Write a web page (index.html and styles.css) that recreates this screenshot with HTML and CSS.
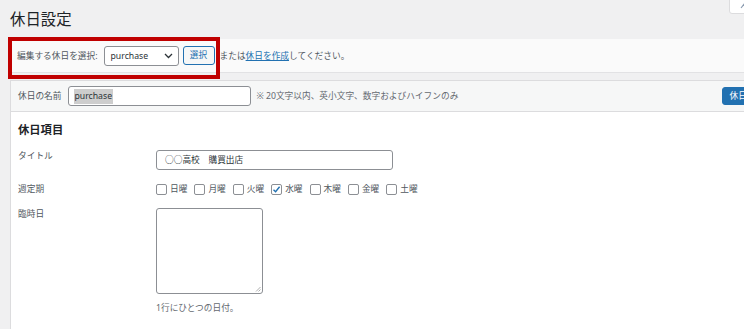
FILE: index.html
```html
<!DOCTYPE html>
<html lang="ja">
<head>
<meta charset="utf-8">
<title>休日設定</title>
<link rel="stylesheet" href="styles.css">
</head>
<body>
<div class="screen-tab"><svg width="6" height="7" viewBox="0 0 6 7"><path d="M1 6 L5 1" stroke="#8a9bb0" stroke-width="1.2" fill="none"/></svg></div>
<div class="wrap">
  <h1 class="page-title">休日設定</h1>
  <div class="manage">
    <span class="label">編集する休日を選択:</span>
    <div class="select"><span>purchase</span><svg class="chev" width="9" height="6" viewBox="0 0 9 6"><path d="M1 1 L4.5 4.5 L8 1" stroke="#2c3338" stroke-width="1.3" fill="none"/></svg></div>
    <button class="btn-secondary">選択</button>
    <span class="or">または<a href="#">休日を作成</a>してください。</span>
    <div class="annot"></div>
  </div>
  <div class="panel">
    <div class="panel-head">
      <span class="label">休日の名前</span>
      <div class="name-input"><span class="sel">purchase</span></div>
      <span class="note">※ 20文字以内、英小文字、数字およびハイフンのみ</span>
      <button class="btn-primary">休日を保存</button>
    </div>
    <div class="panel-body">
      <h3 class="section-title">休日項目</h3>
      <div class="row">
        <span class="row-label">タイトル</span>
        <div class="text-input">○○高校　購買出店</div>
      </div>
      <div class="row row-week">
        <span class="row-label">週定期</span>
        <div class="days">
          <span class="day"><span class="cb"></span>日曜</span>
          <span class="day"><span class="cb"></span>月曜</span>
          <span class="day"><span class="cb"></span>火曜</span>
          <span class="day"><span class="cb checked"><svg width="9" height="9" viewBox="0 0 9 9"><path d="M1.5 4.8 L3.6 6.8 L7.6 1.8" stroke="#2271b1" stroke-width="1.4" fill="none"/></svg></span>水曜</span>
          <span class="day"><span class="cb"></span>木曜</span>
          <span class="day"><span class="cb"></span>金曜</span>
          <span class="day"><span class="cb"></span>土曜</span>
        </div>
      </div>
      <div class="row row-extra">
        <span class="row-label">臨時日</span>
        <div class="field">
          <div class="textarea"><svg class="grip" width="6" height="6" viewBox="0 0 6 6"><path d="M1 5.5 L5.5 1 M3.5 5.5 L5.5 3.5" stroke="#9a9a9a" stroke-width="0.8"/></svg></div>
          <p class="desc">1行にひとつの日付。</p>
        </div>
      </div>
    </div>
  </div>
</div>
</body>
</html>
```
FILE: styles.css
```css
html, body {
  margin: 0;
  padding: 0;
  background: #f0f0f1;
  overflow: hidden;
  width: 744px;
  height: 329px;
}
body {
  font-family: "Noto Sans", "Noto Sans CJK JP", sans-serif;
  font-size: 8.7px;
  color: #3c434a;
  position: relative;
}
.screen-tab {
  position: absolute;
  left: 729px;
  top: -1px;
  width: 40px;
  height: 15px;
  background: #fff;
  border: 1px solid #dcdcde;
  border-radius: 0 0 3px 3px;
  box-sizing: border-box;
  padding: 2px 0 0 10px;
}
.screen-tab svg { display: block; }
.wrap {
  padding-left: 10px;
}
.page-title {
  margin: 0;
  padding-top: 8px;
  font-size: 15.4px;
  line-height: 20px;
  font-weight: 400;
  color: #1d2327;
  font-family: "Noto Sans CJK JP", sans-serif;
}
.manage {
  position: relative;
  margin-top: 11px;
  width: 800px;
  height: 34px;
  box-sizing: border-box;
  background: #fafafa;
  border-bottom: 1px solid #e2e2e4;
  display: flex;
  align-items: center;
  padding-left: 7px;
}
.label {
  color: #50575e;
  line-height: 12px;
}
.select {
  margin-left: 6px;
  width: 75px;
  height: 20px;
  box-sizing: border-box;
  border: 1px solid #8c8f94;
  border-radius: 3px;
  background: #fff;
  display: flex;
  align-items: center;
  justify-content: space-between;
  padding: 0 5px 0 6px;
  color: #2c3338;
  font-size: 8.7px;
}
.chev { display: block; }
.btn-secondary {
  margin-left: 4px;
  height: 19px;
  width: 32px;
  padding: 0;
  box-sizing: border-box;
  border: 1px solid #2271b1;
  border-radius: 3px;
  background: #f6f7f7;
  color: #2271b1;
  font-family: inherit;
  font-size: 8.7px;
  line-height: 17px;
}
.or {
  margin-left: 5px;
  color: #50575e;
  line-height: 12px;
}
.or a {
  color: #2271b1;
  text-decoration: underline;
}
.annot {
  position: absolute;
  left: -2px;
  top: -2px;
  width: 212px;
  height: 42px;
  box-sizing: border-box;
  border: 4px solid #c00000;
}
.panel {
  margin-top: 7px;
  width: 800px;
  height: 260px;
  background: #fff;
  border: 1px solid #dcdcde;
  box-sizing: border-box;
}
.panel-head {
  height: 31px;
  box-sizing: border-box;
  background: #f6f7f7;
  border-bottom: 1px solid #dcdcde;
  display: flex;
  align-items: center;
  padding-left: 7px;
}
.name-input {
  margin-left: 7px;
  width: 183px;
  height: 20px;
  box-sizing: border-box;
  border: 1px solid #8c8f94;
  border-radius: 3px;
  background: #fff;
  display: flex;
  align-items: center;
  padding-left: 5px;
}
.sel {
  background: #cdcdcd;
  color: #2c3338;
  line-height: 15px;
  padding-right: 1px;
}
.note {
  margin-left: 5px;
  color: #646970;
  line-height: 12px;
}
.btn-primary {
  margin-left: auto;
  margin-right: 28px;
  height: 18px;
  padding: 0 7px;
  border: 1px solid #2271b1;
  border-radius: 3px;
  background: #2271b1;
  color: #fff;
  font-family: inherit;
  font-size: 8.7px;
  line-height: 16px;
}
.panel-body {
  padding-left: 7px;
}
.section-title {
  margin: 11px 0 0;
  font-size: 11.3px;
  line-height: 14px;
  font-weight: 700;
  color: #1d2327;
}
.row {
  display: flex;
  align-items: flex-start;
}
.section-title + .row { margin-top: 13px; }
.row-label {
  width: 138px;
  flex: none;
  line-height: 12px;
  color: #50575e;
}
.text-input {
  width: 237px;
  height: 20px;
  box-sizing: border-box;
  border: 1px solid #8c8f94;
  border-radius: 3px;
  padding-left: 8px;
  line-height: 18px;
  color: #2c3338;
}
.row-week { margin-top: 13px; }
.days {
  display: flex;
  gap: 7px;
}
.day {
  display: flex;
  align-items: center;
  gap: 3px;
  line-height: 12px;
  color: #50575e;
}
.cb {
  width: 11px;
  height: 11px;
  box-sizing: border-box;
  border: 1px solid #8c8f94;
  border-radius: 2px;
  background: #fff;
  display: flex;
  align-items: center;
  justify-content: center;
}
.cb svg { display: block; }
.row-extra { margin-top: 13px; }
.field { display: flex; flex-direction: column; }
.textarea {
  position: relative;
  width: 107px;
  height: 86px;
  box-sizing: border-box;
  border: 1px solid #8c8f94;
  border-radius: 3px;
  background: #fff;
}
.grip {
  position: absolute;
  right: 1px;
  bottom: 1px;
}
.desc {
  margin: 8px 0 0;
  line-height: 12px;
  color: #646970;
}
```
